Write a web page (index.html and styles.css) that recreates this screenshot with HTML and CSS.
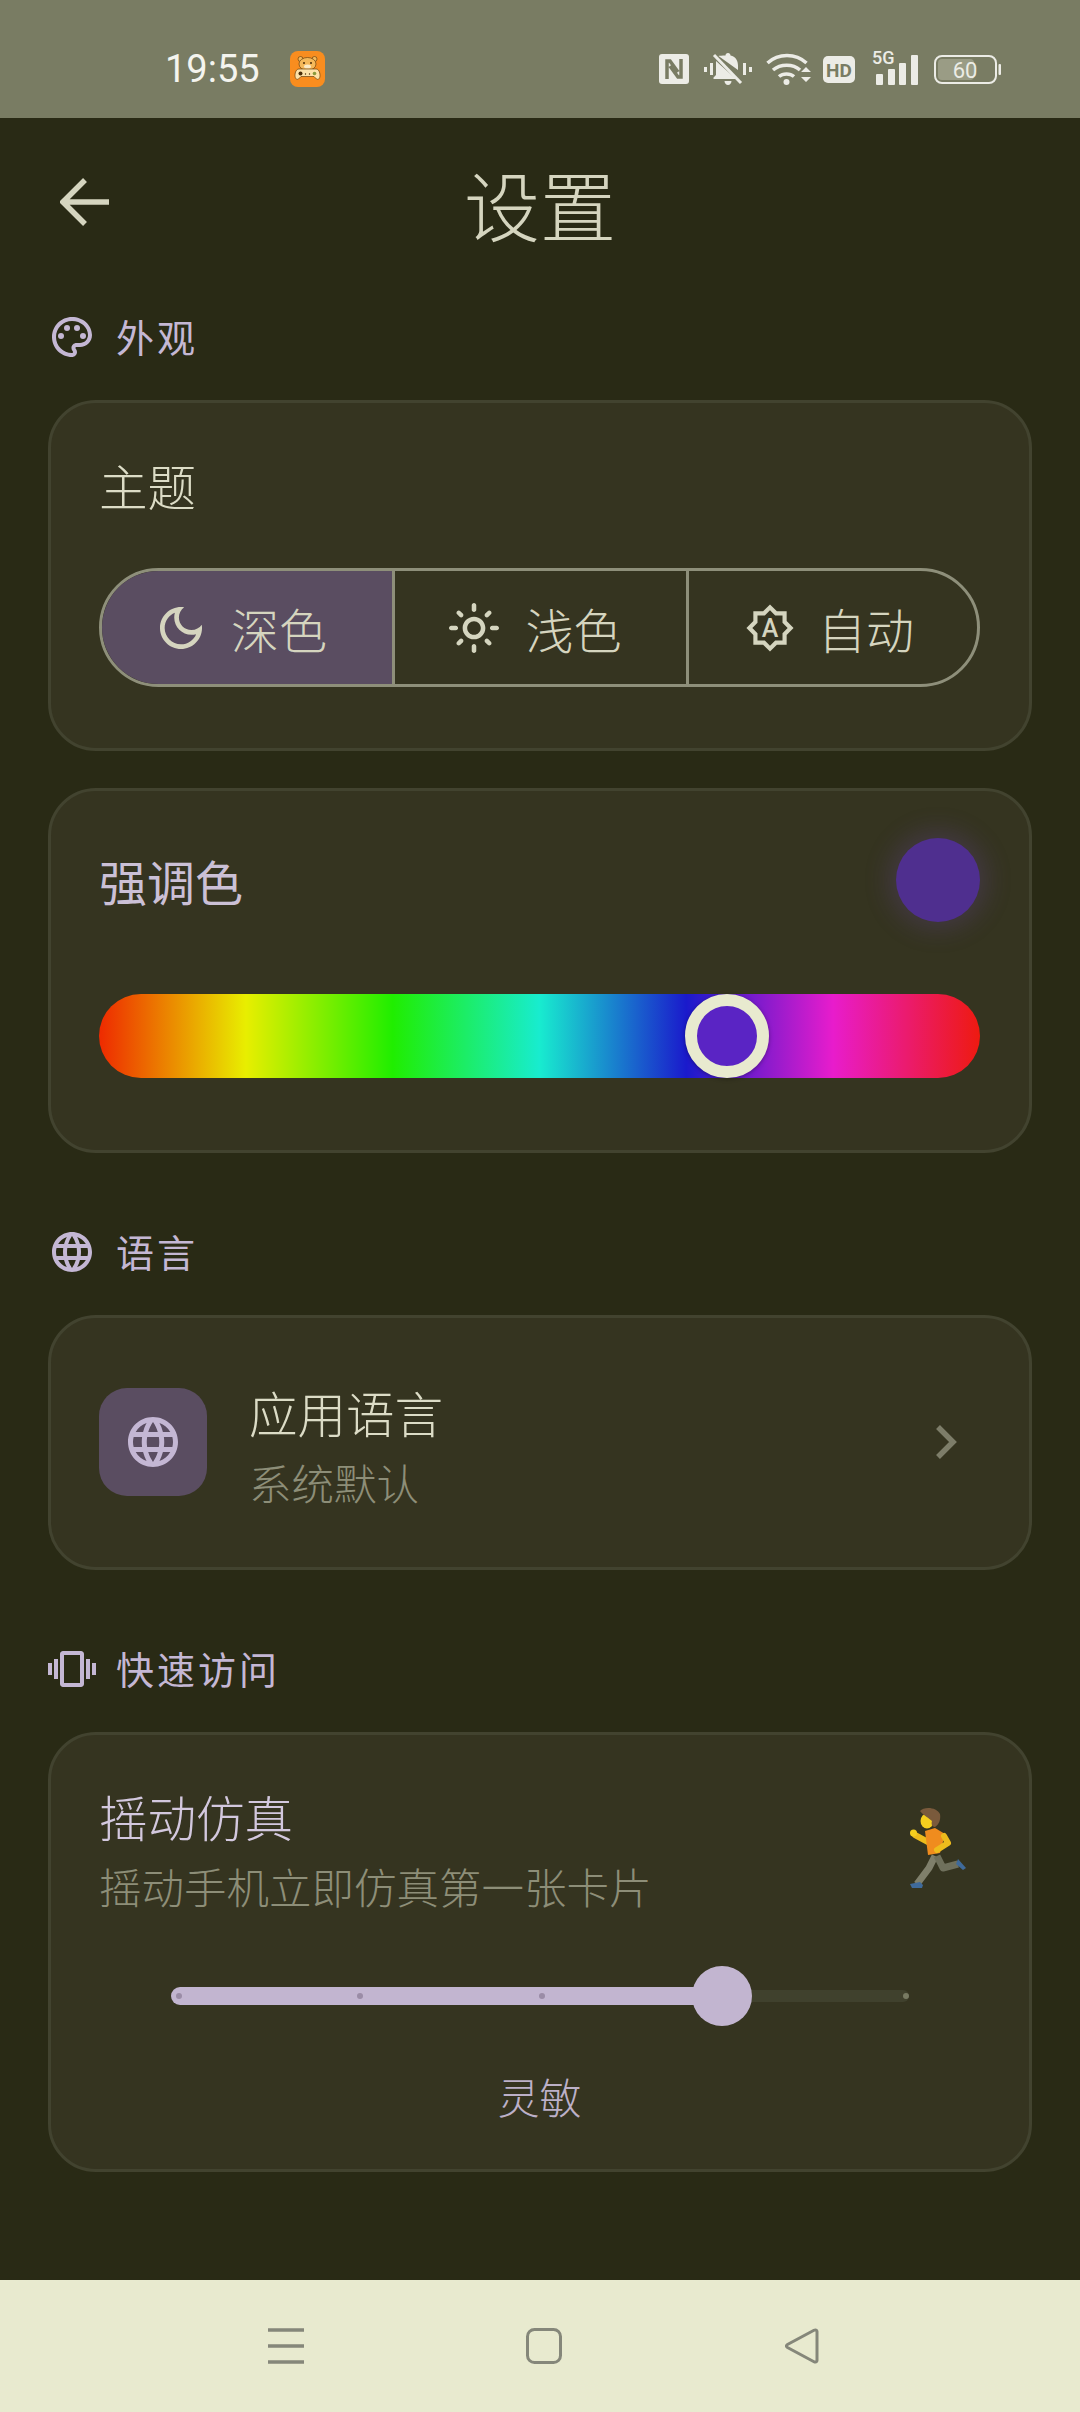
FILE: index.html
```html
<!DOCTYPE html>
<html lang="zh">
<head>
    <meta charset="UTF-8">
    <meta name="viewport" content="width=device-width, initial-scale=1.0">
    <title>设置</title>
    <link rel="stylesheet" href="styles.css">
</head>
<body>
    <div class="statusbar">
        <span class="time">19:55</span>
        <svg class="app-icon" viewBox="0 0 35 36">
            <rect width="35" height="36" rx="8" fill="#f98d1f"/>
            <circle cx="10.500" cy="8" r="2.500" fill="#f5b95a" stroke="#6a4210" stroke-width=".7"/>
            <circle cx="24.500" cy="8" r="2.500" fill="#f5b95a" stroke="#6a4210" stroke-width=".7"/>
            <ellipse cx="17.500" cy="13" rx="8.500" ry="6.500" fill="#f5b95a" stroke="#6a4210" stroke-width=".7"/>
            <circle cx="14" cy="12" r="1" fill="#4a2c08"/>
            <circle cx="21" cy="12" r="1" fill="#4a2c08"/>
            <ellipse cx="17.500" cy="15.500" rx="3.500" ry="2" fill="#fbeac4"/>
            <path d="M9 18h17c2.500 0 4 3 4 6.500s-2 4.500-3.500 3.500l-2.500-2.500H11L8.500 28C7 29 5 28 5 24.500S6.500 18 9 18z" fill="#fde2a8" stroke="#6a4210" stroke-width=".7"/>
            <circle cx="10.500" cy="22.500" r="2" fill="#4a2c08"/>
            <circle cx="24.500" cy="22.500" r="1.800" fill="#8a9a3c"/>
            <circle cx="15.500" cy="23" r=".7" fill="#4a2c08"/>
            <circle cx="19.500" cy="23" r=".7" fill="#4a2c08"/>
        </svg>
        <div class="status-icons">
            <svg class="st-nfc" viewBox="0 0 30 30">
                <rect width="30" height="30" rx="3" fill="#ecece6"/>
                <path d="M8 25V7h3l8 11M22 5v18h-3l-8-11" fill="none" stroke="#797c63" stroke-width="3.500"/>
            </svg>
            <svg class="st-bell" viewBox="0 0 48 34">
                <path d="M0 15h3v5H0zM6 11h3v12H6zM39 11h3v12h-3zM45 15h3v5h-3z" fill="#ecece6"/>
                <path d="M24 1c1.500 0 2.500 1 2.500 2.500 5 1 7.500 5 7.500 10v4.500L14.500 4c.500-.300 4-.500 7-.500C21.500 2 22.500 1 24 1zM12 9l20 18H9.500v-1.500L12 23z" fill="#ecece6"/>
                <path d="M20.500 29h7c0 2-1.500 4-3.500 4s-3.500-2-3.500-4z" fill="#ecece6"/>
                <path d="M10 3l27 28" stroke="#ecece6" stroke-width="3"/>
            </svg>
            <svg class="st-wifi" viewBox="0 0 45 32">
                <g fill="none" stroke="#ecece6" stroke-width="3.500">
                    <path d="M1.500 10c11-10 28-10 39 0"/>
                    <path d="M7 17c7.500-6.500 20-6.500 27 0"/>
                    <path d="M13 23.500c4-3.500 11-3.500 15 0"/>
                </g>
                <circle cx="20.500" cy="29" r="3" fill="#ecece6"/>
                <path d="M35 19l5-5 5 5zM35 24h10l-5 5z" fill="#ecece6"/>
            </svg>
            <svg class="st-hd" viewBox="0 0 32 27">
                <rect width="32" height="27" rx="5" fill="#ecece6"/>
                <text x="16" y="20.500" text-anchor="middle" class="st-hd-text">HD</text>
            </svg>
            <svg class="st-net" viewBox="0 -8 46 39">
                <text x="0" y="10" class="st-5g-text">5G</text>
                <rect x="4" y="20" width="7" height="11" rx="1" fill="#ecece6"/>
                <rect x="16" y="15" width="7" height="16" rx="1" fill="#ecece6"/>
                <rect x="27" y="9" width="7" height="22" rx="1" fill="#ecece6"/>
                <rect x="39" y="1" width="7" height="30" rx="1" fill="#ecece6"/>
            </svg>
            <svg class="st-batt" viewBox="0 0 67 29">
                <rect x="1" y="1" width="61" height="27" rx="7" fill="none" stroke="#ecece6" stroke-width="2"/>
                <rect x="4" y="4" width="36" height="21" rx="4" fill="#9a9c85"/>
                <rect x="64.500" y="9" width="2.500" height="11" rx="1" fill="#ecece6"/>
                <text x="31" y="22.500" text-anchor="middle" class="st-batt-text">60</text>
            </svg>
        </div>
    </div>

    <main class="page">
        <header class="topbar">
            <svg class="back" viewBox="0 0 49 48">
                <path d="M25 2L3 24l22 22M3 24h46" fill="none" stroke="#d5d5bf" stroke-width="5.500"/>
            </svg>
            <h1 class="title">设置</h1>
            <span></span>
        </header>

        <div class="section-head first">
            <svg class="sec-icon" viewBox="2 2 20 20">
                <path d="M12 22C6.490 22 2 17.510 2 12S6.490 2 12 2s10 4.040 10 9c0 3.310-2.690 6-6 6h-1.770c-.280 0-.500.220-.500.500 0 .120.050.230.130.330.410.470.640 1.060.640 1.670 0 1.380-1.120 2.500-2.500 2.500zm0-18c-4.410 0-8 3.590-8 8s3.590 8 8 8c.280 0 .500-.220.500-.500 0-.160-.080-.280-.140-.350-.410-.460-.630-1.050-.630-1.650 0-1.380 1.120-2.500 2.500-2.500H16c2.210 0 4-1.790 4-4 0-3.860-3.590-7-8-7z"/>
                <circle cx="6.500" cy="11.500" r="1.500"/>
                <circle cx="9.500" cy="7.500" r="1.500"/>
                <circle cx="14.500" cy="7.500" r="1.500"/>
                <circle cx="17.500" cy="11.500" r="1.500"/>
            </svg>
            <span class="head-text">外观</span>
        </div>

        <section class="card card-theme">
            <div class="card-title light cream">主题</div>
            <div class="segments">
                <div class="segment active">
                    <svg class="seg-icon" viewBox="3 3 18 18"><path d="M9.370 5.510c-.180.640-.270 1.310-.270 1.990 0 4.080 3.320 7.400 7.400 7.400.680 0 1.350-.090 1.990-.270C17.450 17.190 14.930 19 12 19c-3.860 0-7-3.140-7-7 0-2.930 1.810-5.450 4.370-6.490zM12 3c-4.970 0-9 4.030-9 9s4.030 9 9 9 9-4.030 9-9c0-.460-.040-.920-.100-1.360-.980 1.370-2.580 2.260-4.400 2.260-2.980 0-5.400-2.420-5.400-5.400 0-1.810.890-3.420 2.260-4.400-.440-.060-.900-.100-1.360-.100z"/></svg>
                    <span>深色</span>
                </div>
                <div class="segment">
                    <svg class="seg-icon wide" viewBox="1 1 22 22"><path d="M12 9c1.650 0 3 1.350 3 3s-1.350 3-3 3-3-1.350-3-3 1.350-3 3-3m0-2c-2.760 0-5 2.240-5 5s2.240 5 5 5 5-2.240 5-5-2.240-5-5-5zM2 13h2c.550 0 1-.450 1-1s-.450-1-1-1H2c-.550 0-1 .450-1 1s.450 1 1 1zm18 0h2c.550 0 1-.450 1-1s-.450-1-1-1h-2c-.550 0-1 .450-1 1s.450 1 1 1zM11 2v2c0 .550.450 1 1 1s1-.450 1-1V2c0-.550-.450-1-1-1s-1 .450-1 1zm0 18v2c0 .550.450 1 1 1s1-.450 1-1v-2c0-.550-.450-1-1-1s-1 .450-1 1zM5.990 4.580c-.390-.390-1.030-.390-1.410 0-.390.390-.390 1.030 0 1.410l1.060 1.060c.390.390 1.030.390 1.410 0s.390-1.030 0-1.410L5.990 4.580zm12.370 12.370c-.390-.390-1.030-.390-1.410 0-.390.390-.390 1.030 0 1.410l1.060 1.060c.390.390 1.030.390 1.410 0 .390-.390.390-1.030 0-1.410l-1.060-1.060zm1.060-10.960c.390-.390.390-1.030 0-1.410-.390-.390-1.030-.390-1.410 0l-1.060 1.060c-.390.390-.390 1.030 0 1.410s1.030.390 1.410 0l1.060-1.060zM7.050 18.360c.390-.390.390-1.030 0-1.410-.390-.390-1.030-.390-1.410 0l-1.060 1.060c-.390.390-.390 1.030 0 1.410s1.030.390 1.410 0l1.060-1.060z"/></svg>
                    <span>浅色</span>
                </div>
                <div class="segment">
                    <svg class="seg-icon wide" viewBox="0 0 24 24">
                        <path d="M20 8.690V4h-4.690L12 .690 8.690 4H4v4.690L.690 12 4 15.310V20h4.690L12 23.310 15.310 20H20v-4.690L23.310 12 20 8.690zm-2 5.790V18h-3.520L12 20.480 9.520 18H6v-3.520L3.520 12 6 9.520V6h3.520L12 3.520 14.480 6H18v3.520L20.480 12 18 14.480z"/>
                        <text x="12" y="16.500" text-anchor="middle" class="seg-auto-text">A</text>
                    </svg>
                    <span>自动</span>
                </div>
            </div>
        </section>

        <section class="card card-accent">
            <div class="accent-row">
                <div class="card-title lilac">强调色</div>
                <div class="swatch"></div>
            </div>
            <div class="hue-bar">
                <div class="hue-thumb" style="left: 71.25%"></div>
            </div>
        </section>

        <div class="section-head">
            <svg class="sec-icon" viewBox="2 2 20 20"><use href="#globe"/></svg>
            <span class="head-text">语言</span>
        </div>

        <section class="card card-lang">
            <div class="lang-box">
                <svg class="lang-globe" viewBox="2 2 20 20">
                    <path id="globe" d="M11.990 2C6.470 2 2 6.480 2 12s4.470 10 9.990 10C17.520 22 22 17.520 22 12S17.520 2 11.990 2zm6.930 6h-2.950c-.320-1.250-.780-2.450-1.380-3.560 1.840.630 3.370 1.910 4.330 3.560zM12 4.040c.830 1.200 1.480 2.530 1.910 3.960h-3.820c.430-1.430 1.080-2.760 1.910-3.960zM4.260 14C4.100 13.360 4 12.690 4 12s.100-1.360.260-2h3.380c-.080.660-.140 1.320-.140 2s.060 1.340.140 2H4.260zm.820 2h2.950c.320 1.250.780 2.450 1.380 3.560-1.840-.630-3.370-1.900-4.330-3.560zm2.950-8H5.080c.960-1.660 2.490-2.930 4.330-3.560C8.810 5.550 8.350 6.750 8.030 8zM12 19.960c-.830-1.200-1.480-2.530-1.910-3.960h3.820c-.430 1.430-1.080 2.760-1.910 3.960zM14.340 14H9.660c-.090-.660-.160-1.320-.160-2s.070-1.350.160-2h4.680c.090.650.160 1.320.160 2s-.070 1.340-.160 2zm.250 5.560c.600-1.110 1.060-2.310 1.380-3.560h2.950c-.960 1.650-2.490 2.930-4.330 3.560zM16.360 14c.080-.660.140-1.320.140-2s-.060-1.340-.140-2h3.380c.160.640.260 1.310.260 2s-.100 1.360-.260 2h-3.380z"/>
                </svg>
            </div>
            <div class="lang-text">
                <div class="lang-name">应用语言</div>
                <div class="sub">系统默认</div>
            </div>
            <svg class="chevron" viewBox="0 0 24 36">
                <path d="M4 3l15 15L4 33" fill="none" stroke="#7d7d69" stroke-width="5.500"/>
            </svg>
        </section>

        <div class="section-head">
            <svg class="sec-icon vib" viewBox="0 3 24 18"><path d="M0 15h2V9H0v6zm3 2h2V7H3v10zm19-8v6h2V9h-2zm-3 8h2V7h-2v10zM16.500 3h-9C6.670 3 6 3.670 6 4.500v15c0 .830.670 1.500 1.500 1.500h9c.830 0 1.500-.670 1.500-1.500v-15c0-.830-.670-1.500-1.500-1.500zM16 19H8V5h8v14z"/></svg>
            <span class="head-text">快速访问</span>
        </div>

        <section class="card card-shake">
            <div class="shake-head">
                <div>
                    <div class="card-title light lilac">摇动仿真</div>
                    <div class="sub shake-sub">摇动手机立即仿真第一张卡片</div>
                </div>
                <svg class="runner" viewBox="0 0 56 82">
                    <path d="M25 50L19 62 7 78" fill="none" stroke="#7f7f6b" stroke-width="7" stroke-linejoin="round"/>
                    <path d="M27 50l6 12 15-4" fill="none" stroke="#6f705c" stroke-width="7" stroke-linejoin="round"/>
                    <path d="M0 78l10-2 3 3-1 3H2zM48 53l8 9-3 2-7-6z" fill="#3f6a9a"/>
                    <path d="M18 36L5 29" fill="none" stroke="#eebc1c" stroke-width="6" stroke-linecap="round"/>
                    <circle cx="3.500" cy="27" r="3.500" fill="#f5cf1e"/>
                    <path d="M15 25l10-3 10 6-5 19-12 2z" fill="#f08c1e"/>
                    <path d="M34 30l4 7-11 7" fill="none" stroke="#eebc1c" stroke-width="6" stroke-linejoin="round" stroke-linecap="round"/>
                    <ellipse cx="17" cy="15" rx="6.500" ry="7.500" fill="#f5cf1e"/>
                    <path d="M10 5c4-5 17-4 20 3 1 5-1 11-5 13-3 0-4-3-3-6-3-3-8-5-12-10z" fill="#7a5a3c"/>
                </svg>
            </div>
            <div class="slider">
                <div class="slider-fill" style="width: 74.6%"></div>
                <div class="slider-track"></div>
                <i class="tick on" style="left: 0.7%"></i>
                <i class="tick on" style="left: 25.2%"></i>
                <i class="tick on" style="left: 49.9%"></i>
                <i class="tick" style="left: 99.2%"></i>
                <div class="slider-thumb" style="left: 74.6%"></div>
            </div>
            <div class="slider-label">灵敏</div>
        </section>
    </main>

    <nav class="navbar">
        <svg class="nav-menu" viewBox="0 0 36 36">
            <path d="M0 2h36M0 18h36M0 34h36" stroke="#85877a" stroke-width="3.500"/>
        </svg>
        <svg class="nav-home" viewBox="0 0 36 36">
            <rect x="1.500" y="1.500" width="33" height="33" rx="7" fill="none" stroke="#85877a" stroke-width="3"/>
        </svg>
        <svg class="nav-back" viewBox="0 0 34 36">
            <path d="M32 3.500v29c0 1.500-1.500 2-3 1.200L2.500 19.500c-1.500-1-1.500-2 0-3L29 2.300c1.500-.800 3-.300 3 1.200z" fill="none" stroke="#85877a" stroke-width="3"/>
        </svg>
    </nav>
</body>
</html>
```

FILE: styles.css
```css
* {
    box-sizing: border-box;
}

body {
    margin: 0;
    width: 1080px;
    height: 2412px;
    display: flex;
    flex-direction: column;
    overflow: hidden;
    background: #292a15;
    font-family: "Noto Sans CJK SC", "Noto Sans", sans-serif;
    font-weight: 300;
    color: #d5d5bf;
}

/* status bar */
.statusbar {
    height: 118px;
    flex-shrink: 0;
    display: flex;
    align-items: center;
    padding: 20px 79px 0 165px;
    background: #797c63;
}

.time {
    font-family: Roboto, sans-serif;
    font-size: 38px;
    font-weight: 400;
    color: #f4f4ee;
}

.app-icon {
    width: 35px;
    height: 36px;
    margin-left: 30px;
}

.status-icons {
    margin-left: auto;
    display: flex;
    align-items: center;
}

.st-nfc { width: 30px; height: 30px; }
.st-bell { width: 48px; height: 34px; margin-left: 15px; }
.st-wifi { width: 45px; height: 32px; margin-left: 14px; }
.st-hd { width: 32px; height: 27px; margin-left: 12px; }
.st-net { width: 46px; height: 39px; margin-top: -8px; margin-left: 17px; }
.st-batt { width: 67px; height: 29px; margin-left: 16px; }

.st-hd-text {
    font-family: Roboto, sans-serif;
    font-size: 19px;
    font-weight: 700;
    fill: #797c63;
}

.st-5g-text {
    font-family: Roboto, sans-serif;
    font-size: 18px;
    font-weight: 500;
    fill: #ecece6;
}

.st-batt-text {
    font-family: Roboto, sans-serif;
    font-size: 22px;
    font-weight: 400;
    fill: #ecece6;
}

/* page */
.page {
    flex: 1;
    padding: 0 48px;
}

.topbar {
    height: 170px;
    display: grid;
    grid-template-columns: 1fr auto 1fr;
    align-items: center;
}

.back {
    width: 49px;
    height: 48px;
    margin-left: 12px;
    margin-bottom: 2px;
}

.title {
    margin: 0;
    font-size: 76px;
    font-weight: 300;
    line-height: 1;
    color: #d5d5bf;
}

.section-head {
    height: 40px;
    margin-top: 79px;
    margin-bottom: 43px;
    display: flex;
    align-items: center;
    font-size: 38px;
    letter-spacing: 3px;
    font-weight: 400;
    color: #c4b7d4;
}

.section-head.first {
    margin-top: 29px;
}

.head-text {
    margin-top: -3px;
}

.sec-icon {
    width: 40px;
    height: 40px;
    margin-left: 4px;
    margin-right: 24px;
    fill: #c4b7d4;
}

.sec-icon.vib {
    width: 48px;
    height: 36px;
    margin-left: 0;
    margin-right: 20px;
}

.card {
    border: 3px solid #42432f;
    border-radius: 48px;
    background: #353420;
    padding-left: 48px;
    padding-right: 49px;
}

.card-title {
    font-size: 48px;
    line-height: 60px;
    font-weight: 400;
}

.card-title.light {
    font-size: 48.5px;
    font-weight: 300;
}

.cream {
    color: #dcdcc6;
}

.lilac {
    color: #cbc0d6;
}

.light.lilac {
    color: #d3c8de;
}

.sub {
    font-size: 42.5px;
    line-height: 50px;
    color: #8d8e78;
}

/* theme switch */
.card-theme {
    height: 351px;
    padding-top: 52px;
}

.segments {
    height: 119px;
    margin-top: 53px;
    display: flex;
    border: 3px solid #8e8f7a;
    border-radius: 60px;
    overflow: hidden;
}

.segment {
    flex: 1;
    display: flex;
    align-items: center;
    justify-content: center;
    gap: 26px;
    padding-right: 10px;
    font-size: 48px;
    border-left: 3px solid #8e8f7a;
}

.segment:first-child {
    flex: 0 0 290px;
    gap: 29px;
    padding-right: 7px;
    border-left: none;
}

.segment:last-child {
    gap: 23px;
    padding-right: 7px;
}

.segment.active {
    background: #5a4d61;
}

.seg-icon {
    width: 42px;
    height: 42px;
    fill: #d5d5bf;
}

.seg-icon.wide {
    width: 50px;
    height: 50px;
}

.seg-auto-text {
    font-family: Roboto, sans-serif;
    font-size: 12px;
    font-weight: 500;
}

/* accent colour */
.card-accent {
    height: 365px;
    margin-top: 37px;
    padding-top: 47px;
}

.accent-row {
    height: 84px;
    display: flex;
    align-items: center;
    justify-content: space-between;
}

.swatch {
    width: 84px;
    height: 84px;
    border-radius: 50%;
    background: #4f2f8f;
    box-shadow: 0 0 24px 8px rgba(110, 70, 170, 0.24);
}

.hue-bar {
    position: relative;
    height: 84px;
    margin-top: 72px;
    border-radius: 42px;
    background: linear-gradient(90deg, #ee2a00, #e8ee00 16.67%, #20ee00 33.33%, #18eccf 50%, #1a1acc 66.67%, #e81ccc 83.33%, #ee1a10);
}

.hue-thumb {
    position: absolute;
    top: 0;
    width: 84px;
    height: 84px;
    margin-left: -42px;
    border: 12px solid #e8eacf;
    border-radius: 50%;
    background: #5a24c4;
    box-shadow: 0 1px 4px rgba(0, 0, 0, 0.35);
}

/* language */
.card-lang {
    height: 255px;
    padding-top: 66px;
    display: flex;
    align-items: flex-start;
}

.lang-box {
    width: 108px;
    height: 108px;
    margin-top: 4px;
    display: flex;
    align-items: center;
    justify-content: center;
    border-radius: 28px;
    background: #5a4d61;
}

.lang-globe {
    width: 50px;
    height: 50px;
    fill: #c4b7d4;
}

.lang-text {
    margin-left: 42px;
}

.lang-name {
    font-size: 48.5px;
    line-height: 56px;
    font-weight: 300;
    margin-bottom: 17px;
    color: #dcdcc6;
}

.chevron {
    width: 24px;
    height: 36px;
    margin-left: auto;
    margin-top: 40px;
    margin-right: 22px;
}

/* shake */
.card-shake {
    height: 440px;
    padding-top: 51px;
}

.shake-head {
    display: flex;
    justify-content: space-between;
    align-items: flex-start;
}

.shake-sub {
    margin-top: 15px;
}

.runner {
    width: 56px;
    height: 82px;
    margin-top: 20px;
    margin-right: 14px;
}

.slider {
    position: relative;
    height: 60px;
    margin: 55px 71px 0 72px;
    display: flex;
    align-items: center;
}

.slider-fill {
    height: 18px;
    border-radius: 9px 0 0 9px;
    background: #c2b5d0;
}

.slider-track {
    flex: 1;
    height: 12px;
    border-radius: 0 6px 6px 0;
    background: #40412d;
}

.tick {
    position: absolute;
    top: 27px;
    width: 6px;
    height: 6px;
    border-radius: 50%;
    background: #787a62;
}

.tick.on {
    background: #9a8ca6;
}

.slider-thumb {
    position: absolute;
    top: 0;
    width: 60px;
    height: 60px;
    margin-left: -30px;
    border-radius: 50%;
    background: #c2b5d0;
}

.slider-label {
    margin-top: 40px;
    font-size: 42px;
    line-height: 60px;
    text-align: center;
    color: #bcb0c8;
}

/* nav bar */
.navbar {
    height: 132px;
    flex-shrink: 0;
    display: flex;
    align-items: center;
    padding: 0 0 0 268px;
    background: #e8eacf;
}

.nav-menu { width: 36px; height: 36px; }
.nav-home { width: 36px; height: 36px; margin-left: 222px; }
.nav-back { width: 34px; height: 36px; margin-left: 223px; }
```
